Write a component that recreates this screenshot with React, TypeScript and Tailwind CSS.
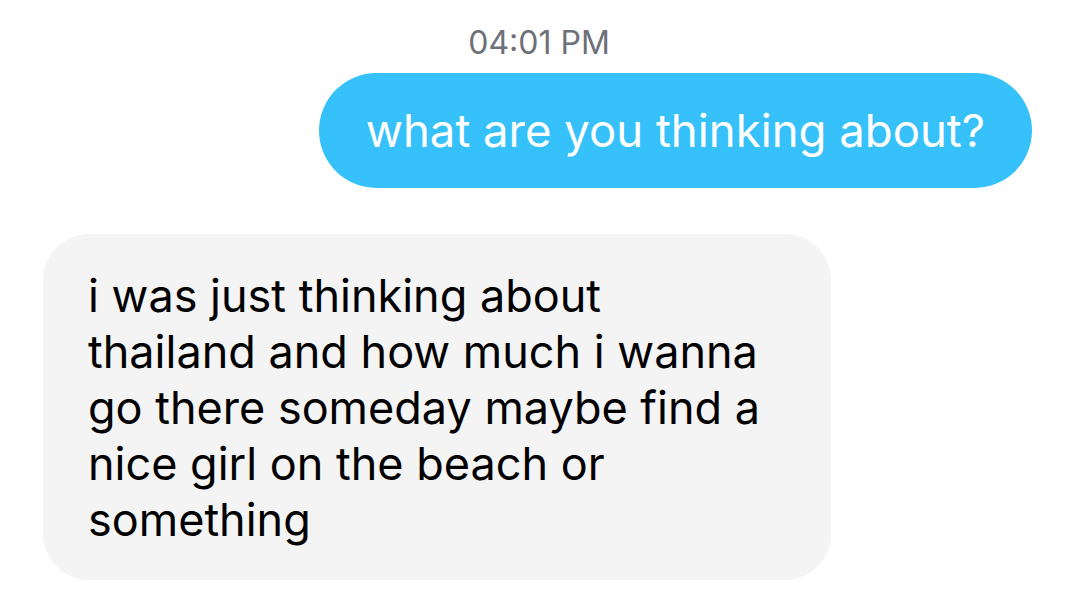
import React from 'react'

const lines = [
  'i was just thinking about',
  'thailand and how much i wanna',
  'go there someday maybe find a',
  'nice girl on the beach or',
  'something',
]

const App = () => {
  return (
    <div className="h-[616px] w-[1078px] overflow-hidden bg-white font-['Inter',sans-serif]">
      <div className="pt-[25px] text-center text-[32px] leading-[36px] text-[#6d7077]">
        04:01 PM
      </div>

      <div className="mt-[12px] flex justify-end pr-[46px]">
        <div className="flex h-[115px] items-center rounded-full bg-[#36c1fb] px-[47px] text-[45.5px] leading-[52px] text-white">
          what are you thinking about?
        </div>
      </div>

      <div className="mt-[46px] pl-[43px]">
        <div className="w-[788px] rounded-[46px] bg-[#f4f4f4] px-[45px] pt-[34px] pb-[32px] text-[45px] leading-[56px] text-black">
          {lines.map((l) => (
            <div key={l} className="whitespace-nowrap">
              {l}
            </div>
          ))}
        </div>
      </div>
    </div>
  )
}

export default App
